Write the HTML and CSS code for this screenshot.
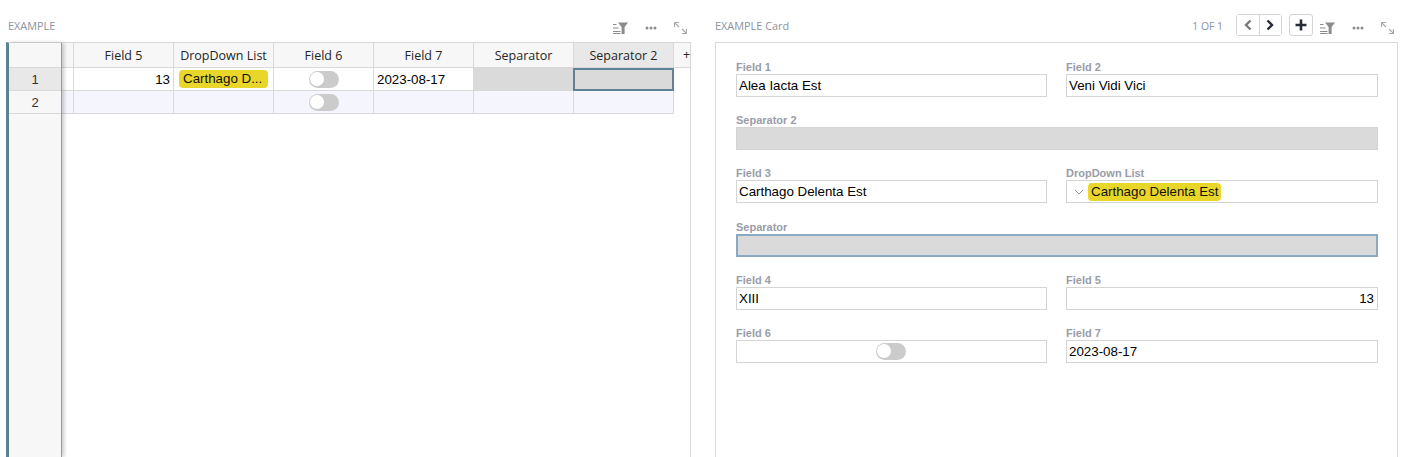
FILE: index.html
```html
<!DOCTYPE html>
<html lang="en">
<head>
<meta charset="utf-8">
<title>EXAMPLE</title>
<link rel="stylesheet" href="styles.css">
</head>
<body>
<svg class="defs" width="0" height="0" aria-hidden="true">
  <symbol id="i-filter" viewBox="0 0 15 12">
    <path d="M5 0.5h10L11.6 5v7L8.6 12V5z" fill="#8b8b8b"/>
    <path d="M0 2.5h3.5M0 6h5.5M0 9.5h7.5M0 11.5h7.5" stroke="#8b8b8b" stroke-width="1" fill="none"/>
  </symbol>
  <symbol id="i-dots" viewBox="0 0 12 4">
    <circle cx="2" cy="2" r="1.5" fill="#8b8b8b"/><circle cx="6" cy="2" r="1.5" fill="#8b8b8b"/><circle cx="10" cy="2" r="1.5" fill="#8b8b8b"/>
  </symbol>
  <symbol id="i-expand" viewBox="0 0 13 12">
    <path d="M0.5 5V0.5H5M0.8 0.8L5 5M12.5 7v4.5H8M12.2 11.2L8 7" stroke="#a8a8a8" stroke-width="1.2" fill="none"/>
  </symbol>
</svg>
<main class="app">
  <section class="panel panel-grid">
    <header class="bar">
      <h2 class="title">EXAMPLE</h2>
      <div class="tools">
        <svg class="ic-filter"><use href="#i-filter"/></svg>
        <svg class="ic-dots"><use href="#i-dots"/></svg>
        <svg class="ic-expand"><use href="#i-expand"/></svg>
      </div>
    </header>
    <div class="sheet">
      <div class="rownums">
        <div class="rn-head"></div>
        <div class="rn rn-active">1</div>
        <div class="rn">2</div>
      </div>
      <div class="cols">
        <div class="row row-head">
          <div class="stub"></div>
          <div class="cell">Field 5</div>
          <div class="cell">DropDown List</div>
          <div class="cell">Field 6</div>
          <div class="cell">Field 7</div>
          <div class="cell">Separator</div>
          <div class="cell cell-headsel">Separator 2</div>
          <div class="add">+</div>
        </div>
        <div class="row row-data">
          <div class="stub"></div>
          <div class="cell cell-num">13</div>
          <div class="cell cell-chip"><span class="chip chip-clip">Carthago D...</span></div>
          <div class="cell cell-tog"><span class="toggle"></span></div>
          <div class="cell cell-text">2023-08-17</div>
          <div class="cell cell-sep"></div>
          <div class="cell cell-sep cell-sel"></div>
        </div>
        <div class="row row-data row-new">
          <div class="stub"></div>
          <div class="cell"></div>
          <div class="cell"></div>
          <div class="cell cell-tog"><span class="toggle"></span></div>
          <div class="cell"></div>
          <div class="cell"></div>
          <div class="cell"></div>
        </div>
      </div>
    </div>
  </section>
  <section class="panel panel-card">
    <header class="bar">
      <h2 class="title">EXAMPLE Card</h2>
      <div class="tools tools-card">
        <span class="count">1 OF 1</span>
        <div class="pager">
          <button class="pg pg-prev" aria-label="Previous"><svg width="10" height="12" viewBox="0 0 10 12"><path d="M7.5 1.5L3 6l4.5 4.5" stroke="#7a7a7a" stroke-width="2.4" fill="none"/></svg></button>
          <button class="pg" aria-label="Next"><svg width="10" height="12" viewBox="0 0 10 12"><path d="M2.5 1.5L7 6l-4.5 4.5" stroke="#262b36" stroke-width="2.4" fill="none"/></svg></button>
        </div>
        <button class="pg pg-add" aria-label="Add"><svg width="12" height="12" viewBox="0 0 12 12"><path d="M6 0.5v11M0.5 6h11" stroke="#262b36" stroke-width="2.6" fill="none"/></svg></button>
        <svg class="ic-filter"><use href="#i-filter"/></svg>
        <svg class="ic-dots"><use href="#i-dots"/></svg>
        <svg class="ic-expand"><use href="#i-expand"/></svg>
      </div>
    </header>
    <div class="card">
      <div class="field"><label class="lbl">Field 1</label><div class="box">Alea Iacta Est</div></div>
      <div class="field"><label class="lbl">Field 2</label><div class="box">Veni Vidi Vici</div></div>
      <div class="field field-wide"><label class="lbl">Separator 2</label><div class="box box-sep"></div></div>
      <div class="field"><label class="lbl">Field 3</label><div class="box">Carthago Delenta Est</div></div>
      <div class="field"><label class="lbl">DropDown List</label><div class="box box-drop"><svg class="chev" width="10" height="6" viewBox="0 0 10 6"><path d="M1 1l4 4 4-4" stroke="#999" stroke-width="1" fill="none"/></svg><span class="chip">Carthago Delenta Est</span></div></div>
      <div class="field field-wide"><label class="lbl">Separator</label><div class="box box-sep box-sel"></div></div>
      <div class="field"><label class="lbl">Field 4</label><div class="box">XIII</div></div>
      <div class="field"><label class="lbl">Field 5</label><div class="box box-num">13</div></div>
      <div class="field"><label class="lbl">Field 6</label><div class="box box-tog"><span class="toggle"></span></div></div>
      <div class="field"><label class="lbl">Field 7</label><div class="box">2023-08-17</div></div>
    </div>
  </section>
</main>
</body>
</html>
```
FILE: styles.css
```css
* { box-sizing: border-box; }
html, body { margin: 0; height: 100%; background: #fff; overflow: hidden; }
body { font-family: "Liberation Sans", Arial, sans-serif; color: #000; }
.defs { position: absolute; }
.app { display: flex; height: 457px; }
.panel { display: flex; flex-direction: column; height: 100%; }
.panel-grid { width: 691px; padding-left: 6px; }
.panel-card { width: 683px; margin-left: 24px; }
.bar { height: 42px; flex: none; display: flex; align-items: flex-start; justify-content: space-between; }
.title { margin: 19px 0 0; font: 400 10.9px/14px "Open Sans", sans-serif; color: #8e93a0; }
.panel-grid .title { margin-left: 2px; }
.tools { display: flex; align-items: flex-start; padding-right: 4px; }
.tools svg { display: block; flex: none; }
.ic-filter { width: 15px; height: 12px; margin-top: 22px; }
.ic-dots { width: 12px; height: 4px; margin: 26px 0 0 17px; }
.ic-expand { width: 13px; height: 12px; margin: 22px 0 0 17px; }
.count { margin: 19px 13px 0 0; font: 400 10.4px/14px "Open Sans", sans-serif; color: #8892a3; }
.pager { display: flex; width: 46px; height: 22px; margin-top: 14px; border: 1px solid #d4d4d4; border-radius: 3px; }
.pg { display: flex; align-items: center; justify-content: center; flex: 1; padding: 0; background: #fff; border: 0; }
.pg-prev { border-right: 1px solid #d4d4d4; }
.pg-add { flex: none; width: 24px; height: 22px; margin: 14px 7px 0 7px; border: 1px solid #d4d4d4; border-radius: 3px; }

.sheet { flex: 1; display: flex; border-left: 3px solid #5d8394; border-right: 1px solid #d9d9d9; border-top: 1px solid #d9d9d9; }
.rownums { width: 53px; flex: none; background: #f7f7f7; border-right: 1px solid #9a9a9a; box-shadow: 2px 0 4px rgba(0, 0, 0, .22); position: relative; z-index: 1; }
.rn-head { height: 25px; border-bottom: 1px solid #d9d9d9; }
.rn { height: 23px; display: flex; align-items: center; justify-content: center; font-size: 13px; color: #333; border-bottom: 1px solid #d9d9d9; }
.rn-active { background: #e8e8e8; }
.cols { flex: 1; min-width: 0; }
.row { display: flex; }
.row-head { height: 25px; background: #f7f7f7; border-bottom: 1px solid #d9d9d9; font: 400 12.5px "Open Sans", sans-serif; color: #262626; }
.row-data { height: 23px; font-size: 13.33px; width: 612px; border-bottom: 1px solid #d9d9d9; }
.row-new { background: #f4f5fd; }
.stub { width: 12px; flex: none; border-right: 1px solid #d9d9d9; }
.cell { width: 100px; flex: none; display: flex; align-items: center; justify-content: center; border-right: 1px solid #d9d9d9; white-space: nowrap; }
.cell-headsel { background: #e8e8e8; }
.cell-num { justify-content: flex-end; padding-right: 3px; }
.cell-text { justify-content: flex-start; padding-left: 3px; }
.cell-chip { justify-content: flex-start; padding-left: 5px; }
.cell-sep { background: #dadada; border-right-color: #dadada; }
.cell-sel { margin-bottom: -1px; height: 23px; border: 2px solid #5d8394; width: 101px; margin-left: -1px; }
.add { flex: 1; overflow: hidden; padding-left: 9px; line-height: 24px; }
.chip { display: inline-block; height: 18px; line-height: 17px; padding: 0 3px; background: #e8d62a; border-radius: 4px; color: #111; font-size: 13.33px; white-space: nowrap; }
.chip-clip { width: 89px; overflow: hidden; padding-left: 4px; }
.toggle { display: block; position: relative; width: 30px; height: 17px; border-radius: 9px; background: #cbcbcb; }
.toggle::after { content: ""; position: absolute; left: 1px; top: 1.5px; width: 14px; height: 14px; border-radius: 50%; background: #fff; }

.card { flex: 1; display: grid; grid-template-columns: 311px 312px; grid-auto-rows: 53.2px; column-gap: 19px; align-content: start; padding: 15px 0 0 20px; border: 1px solid #d9d9d9; border-bottom: 0; }
.field { display: flex; flex-direction: column; justify-content: flex-start; min-width: 0; }
.field-wide { grid-column: 1 / -1; }
.lbl { height: 16px; font-weight: 700; font-size: 11px; line-height: 18px; color: #9a9ca8; }
.box { height: 23px; display: flex; align-items: center; padding: 1px 3px 0 2px; border: 1px solid #d4d4d4; font-size: 13.33px; line-height: 20px; white-space: nowrap; }
.box-sep { background: #dadada; }
.box-sel { border: 2px solid #8aa9c2; }
.box-num { justify-content: flex-end; }
.box-tog { justify-content: center; padding-top: 0; }
.box-drop { padding: 0 0 0 7px; }
.chev { flex: none; margin-right: 4px; }
```
